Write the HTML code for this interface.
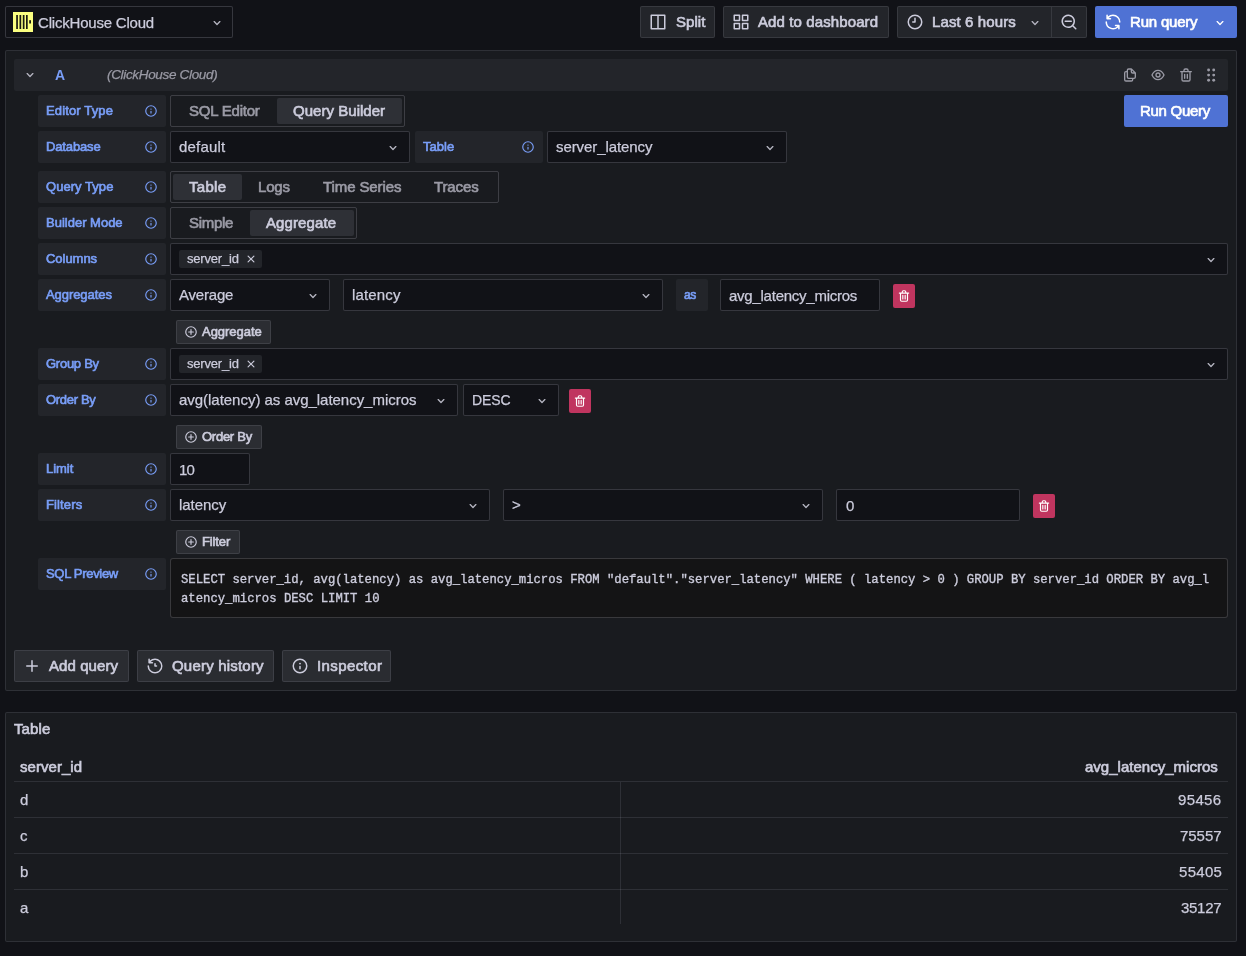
<!DOCTYPE html><html><head><meta charset="utf-8"><style>html,body{margin:0;padding:0;width:1246px;height:956px;overflow:hidden;background:#111217;}.a{position:absolute;box-sizing:border-box;}.t{position:absolute;white-space:pre;will-change:transform;font-family:"Liberation Sans",sans-serif;}.m{font-family:"Liberation Mono",monospace;}</style></head><body>
<div class="a" style="left:5px;top:6px;width:228px;height:32px;background:#111217;border:1px solid rgba(204,204,220,0.20);border-radius:2px;"></div>
<svg class="a" style="left:13px;top:12px;" width="20" height="20" viewBox="0 0 20 20"><rect x="0" y="0" width="20" height="20" fill="#fbff80"/><rect x="3.2" y="3" width="1.7" height="14" fill="#1a1a10"/><rect x="6.5" y="3" width="1.7" height="14" fill="#1a1a10"/><rect x="9.8" y="3" width="1.7" height="14" fill="#1a1a10"/><rect x="13.0" y="3" width="1.7" height="14" fill="#1a1a10"/><rect x="16.2" y="8.2" width="1.8" height="3.3" fill="#1a1a10"/></svg>
<svg class="a" style="left:209px;top:14.5px;" width="16" height="16" viewBox="0 0 24 24"><path d="M17,9.17a1,1,0,0,0-1.41,0L12,12.71,8.46,9.17a1,1,0,0,0-1.41,0,1,1,0,0,0,0,1.42l4.24,4.24a1,1,0,0,0,1.42,0L17,10.59A1,1,0,0,0,17,9.17Z" fill="#b4b4c0"/></svg>
<div class="a" style="left:640px;top:6px;width:75px;height:32px;background:#23252a;border:1px solid rgba(204,204,220,0.12);border-radius:2px;"></div>
<svg class="a" style="left:648.7px;top:13px;" width="18" height="18" viewBox="0 0 24 24"><path d="M21,2H3A1,1,0,0,0,2,3V21a1,1,0,0,0,1,1H21a1,1,0,0,0,1-1V3A1,1,0,0,0,21,2ZM11,20H4V4h7Zm9,0H13V4h7Z" fill="#ccccdc"/></svg>
<div class="a" style="left:723px;top:6px;width:166px;height:32px;background:#23252a;border:1px solid rgba(204,204,220,0.12);border-radius:2px;"></div>
<svg class="a" style="left:731.6px;top:13px;" width="18" height="18" viewBox="0 0 24 24"><path d="M10,13H3a1,1,0,0,0-1,1v7a1,1,0,0,0,1,1h7a1,1,0,0,0,1-1V14A1,1,0,0,0,10,13ZM9,20H4V15H9ZM21,2H14a1,1,0,0,0-1,1v7a1,1,0,0,0,1,1h7a1,1,0,0,0,1-1V3A1,1,0,0,0,21,2ZM20,9H15V4h5Zm1,4H14a1,1,0,0,0-1,1v7a1,1,0,0,0,1,1h7a1,1,0,0,0,1-1V14A1,1,0,0,0,21,13Zm-1,7H15V15h5ZM10,2H3A1,1,0,0,0,2,3v7a1,1,0,0,0,1,1h7a1,1,0,0,0,1-1V3A1,1,0,0,0,10,2ZM9,9H4V4H9Z" fill="#ccccdc"/></svg>
<div class="a" style="left:897px;top:6px;width:190px;height:32px;background:#23252a;border:1px solid rgba(204,204,220,0.12);border-radius:2px;"></div>
<div class="a" style="left:1051px;top:7px;width:1px;height:30px;background:rgba(204,204,220,0.12);"></div>
<svg class="a" style="left:905.9px;top:13px;" width="18" height="18" viewBox="0 0 24 24"><path d="M12,2A10,10,0,1,0,22,12,10,10,0,0,0,12,2Zm0,18a8,8,0,1,1,8-8A8,8,0,0,1,12,20Zm0-14a1,1,0,0,0-1,1v4H9a1,1,0,0,0,0,2h3a1,1,0,0,0,1-1V7A1,1,0,0,0,12,6Z" fill="#ccccdc"/></svg>
<svg class="a" style="left:1027px;top:14.5px;" width="16" height="16" viewBox="0 0 24 24"><path d="M17,9.17a1,1,0,0,0-1.41,0L12,12.71,8.46,9.17a1,1,0,0,0-1.41,0,1,1,0,0,0,0,1.42l4.24,4.24a1,1,0,0,0,1.42,0L17,10.59A1,1,0,0,0,17,9.17Z" fill="#b4b4c0"/></svg>
<svg class="a" style="left:1059.8px;top:13px;" width="18" height="18" viewBox="0 0 24 24"><path d="M21.71,20.29,18,16.61A9,9,0,1,0,16.61,18l3.68,3.68a1,1,0,0,0,1.42,0A1,1,0,0,0,21.71,20.29ZM11,18a7,7,0,1,1,7-7A7,7,0,0,1,11,18Zm4-8H7a1,1,0,0,0,0,2h8a1,1,0,0,0,0-2Z" fill="#ccccdc"/></svg>
<div class="a" style="left:1095px;top:6px;width:142px;height:32px;background:#4f72d4;border-radius:2px;"></div>
<svg class="a" style="left:1103.6px;top:13px;" width="18" height="18" viewBox="0 0 24 24"><path d="M19.91,15.51H15.38a1,1,0,0,0,0,2h2.4A8,8,0,0,1,4,12a1,1,0,0,0-2,0,10,10,0,0,0,16.88,7.23V21a1,1,0,0,0,2,0V16.5A1,1,0,0,0,19.91,15.51ZM12,2A10,10,0,0,0,5.12,4.77V3a1,1,0,0,0-2,0V7.5a1,1,0,0,0,1,1h4.5a1,1,0,0,0,0-2H6.22A8,8,0,0,1,20,12a1,1,0,0,0,2,0A10,10,0,0,0,12,2Z" fill="#ffffff"/></svg>
<svg class="a" style="left:1212.3px;top:14.5px;" width="16" height="16" viewBox="0 0 24 24"><path d="M17,9.17a1,1,0,0,0-1.41,0L12,12.71,8.46,9.17a1,1,0,0,0-1.41,0,1,1,0,0,0,0,1.42l4.24,4.24a1,1,0,0,0,1.42,0L17,10.59A1,1,0,0,0,17,9.17Z" fill="#ffffff"/></svg>
<div class="a" style="left:5px;top:50px;width:1232px;height:641px;background:#191b1f;border:1px solid rgba(204,204,220,0.12);border-radius:2px;"></div>
<div class="a" style="left:14px;top:59px;width:1214px;height:32px;background:#23252a;border-radius:2px;"></div>
<svg class="a" style="left:22.3px;top:66.6px;" width="16" height="16" viewBox="0 0 24 24"><path d="M17,9.17a1,1,0,0,0-1.41,0L12,12.71,8.46,9.17a1,1,0,0,0-1.41,0,1,1,0,0,0,0,1.42l4.24,4.24a1,1,0,0,0,1.42,0L17,10.59A1,1,0,0,0,17,9.17Z" fill="#b4b4c0"/></svg>
<svg class="a" style="left:1121.6px;top:67px;" width="16" height="16" viewBox="0 0 24 24"><path d="M21,8.94a1.31,1.31,0,0,0-.06-.27l0-.09a1.07,1.07,0,0,0-.19-.28h0l-6-6h0a1.07,1.07,0,0,0-.28-.19.32.32,0,0,0-.09,0A.88.88,0,0,0,14.05,2H10A3,3,0,0,0,7,5V6H6A3,3,0,0,0,3,9V19a3,3,0,0,0,3,3h8a3,3,0,0,0,3-3V18h1a3,3,0,0,0,3-3V9S21,9,21,8.94ZM15,5.41,17.59,8H16a1,1,0,0,1-1-1ZM15,19a1,1,0,0,1-1,1H6a1,1,0,0,1-1-1V9A1,1,0,0,1,6,8H7v7a3,3,0,0,0,3,3h5Zm4-4a1,1,0,0,1-1,1H10a1,1,0,0,1-1-1V5a1,1,0,0,1,1-1h3V7a3,3,0,0,0,3,3h3Z" fill="#9a9aa5"/></svg>
<svg class="a" style="left:1150.2px;top:67px;" width="16" height="16" viewBox="0 0 24 24"><path d="M21.92,11.6C19.9,6.91,16.1,4,12,4S4.1,6.91,2.08,11.6a1,1,0,0,0,0,.8C4.1,17.09,7.9,20,12,20s7.9-2.910,9.92-7.6A1,1,0,0,0,21.92,11.6ZM12,18c-3.17,0-6.170-2.29-7.9-6C5.83,8.29,8.83,6,12,6s6.17,2.29,7.9,6C18.17,15.71,15.17,18,12,18ZM12,8a4,4,0,1,0,4,4A4,4,0,0,0,12,8Zm0,6a2,2,0,1,1,2-2A2,2,0,0,1,12,14Z" fill="#9a9aa5"/></svg>
<svg class="a" style="left:1178.1px;top:67px;" width="16" height="16" viewBox="0 0 24 24"><path d="M10,18a1,1,0,0,0,1-1V11a1,1,0,0,0-2,0v6A1,1,0,0,0,10,18ZM20,6H16V5a3,3,0,0,0-3-3H11A3,3,0,0,0,8,5V6H4A1,1,0,0,0,4,8H5V19a3,3,0,0,0,3,3h8a3,3,0,0,0,3-3V8h1a1,1,0,0,0,0-2ZM10,5a1,1,0,0,1,1-1h2a1,1,0,0,1,1,1V6H10Zm7,14a1,1,0,0,1-1,1H8a1,1,0,0,1-1-1V8H17Zm-3-1a1,1,0,0,0,1-1V11a1,1,0,0,0-2,0v6A1,1,0,0,0,14,18Z" fill="#9a9aa5"/></svg>
<svg class="a" style="left:1204px;top:65px;" width="14" height="18" viewBox="0 0 14 18"><circle cx="4.6" cy="5.0" r="1.45" fill="#9a9aa5"/><circle cx="4.6" cy="10.1" r="1.45" fill="#9a9aa5"/><circle cx="4.6" cy="15.2" r="1.45" fill="#9a9aa5"/><circle cx="9.7" cy="5.0" r="1.45" fill="#9a9aa5"/><circle cx="9.7" cy="10.1" r="1.45" fill="#9a9aa5"/><circle cx="9.7" cy="15.2" r="1.45" fill="#9a9aa5"/></svg>
<div class="a" style="left:1124px;top:95px;width:104px;height:32px;background:#4f72d4;border-radius:2px;"></div>
<div class="a" style="left:38px;top:95px;width:128px;height:32px;background:#23252a;border-radius:2px;"></div>
<svg class="a" style="left:143.8px;top:104px;" width="14" height="14" viewBox="0 0 24 24"><path d="M12,2A10,10,0,1,0,22,12,10,10,0,0,0,12,2Zm0,18a8,8,0,1,1,8-8A8,8,0,0,1,12,20Zm0-8.5a1,1,0,0,0-1,1v3a1,1,0,0,0,2,0v-3A1,1,0,0,0,12,11.5Zm0-4a1.25,1.25,0,1,0,1.25,1.25A1.25,1.25,0,0,0,12,7.5Z" fill="#799ef8"/></svg>
<div class="a" style="left:170px;top:95px;width:235px;height:32px;border:1px solid rgba(204,204,220,0.20);border-radius:2px;"></div>
<div class="a" style="left:277px;top:98px;width:125px;height:26px;background:#2e3036;border-radius:2px;"></div>
<div class="a" style="left:38px;top:131px;width:128px;height:32px;background:#23252a;border-radius:2px;"></div>
<svg class="a" style="left:143.8px;top:140px;" width="14" height="14" viewBox="0 0 24 24"><path d="M12,2A10,10,0,1,0,22,12,10,10,0,0,0,12,2Zm0,18a8,8,0,1,1,8-8A8,8,0,0,1,12,20Zm0-8.5a1,1,0,0,0-1,1v3a1,1,0,0,0,2,0v-3A1,1,0,0,0,12,11.5Zm0-4a1.25,1.25,0,1,0,1.25,1.25A1.25,1.25,0,0,0,12,7.5Z" fill="#799ef8"/></svg>
<div class="a" style="left:170px;top:131px;width:240px;height:32px;background:#111217;border:1px solid rgba(204,204,220,0.20);border-radius:2px;"></div>
<svg class="a" style="left:384.8px;top:139.5px;" width="16" height="16" viewBox="0 0 24 24"><path d="M17,9.17a1,1,0,0,0-1.41,0L12,12.71,8.46,9.17a1,1,0,0,0-1.41,0,1,1,0,0,0,0,1.42l4.24,4.24a1,1,0,0,0,1.42,0L17,10.59A1,1,0,0,0,17,9.17Z" fill="#b4b4c0"/></svg>
<div class="a" style="left:415px;top:131px;width:128px;height:32px;background:#23252a;border-radius:2px;"></div>
<svg class="a" style="left:520.8px;top:140px;" width="14" height="14" viewBox="0 0 24 24"><path d="M12,2A10,10,0,1,0,22,12,10,10,0,0,0,12,2Zm0,18a8,8,0,1,1,8-8A8,8,0,0,1,12,20Zm0-8.5a1,1,0,0,0-1,1v3a1,1,0,0,0,2,0v-3A1,1,0,0,0,12,11.5Zm0-4a1.25,1.25,0,1,0,1.25,1.25A1.25,1.25,0,0,0,12,7.5Z" fill="#799ef8"/></svg>
<div class="a" style="left:547px;top:131px;width:240px;height:32px;background:#111217;border:1px solid rgba(204,204,220,0.20);border-radius:2px;"></div>
<svg class="a" style="left:761.8px;top:139.5px;" width="16" height="16" viewBox="0 0 24 24"><path d="M17,9.17a1,1,0,0,0-1.41,0L12,12.71,8.46,9.17a1,1,0,0,0-1.41,0,1,1,0,0,0,0,1.42l4.24,4.24a1,1,0,0,0,1.42,0L17,10.59A1,1,0,0,0,17,9.17Z" fill="#b4b4c0"/></svg>
<div class="a" style="left:38px;top:171px;width:128px;height:32px;background:#23252a;border-radius:2px;"></div>
<svg class="a" style="left:143.8px;top:180px;" width="14" height="14" viewBox="0 0 24 24"><path d="M12,2A10,10,0,1,0,22,12,10,10,0,0,0,12,2Zm0,18a8,8,0,1,1,8-8A8,8,0,0,1,12,20Zm0-8.5a1,1,0,0,0-1,1v3a1,1,0,0,0,2,0v-3A1,1,0,0,0,12,11.5Zm0-4a1.25,1.25,0,1,0,1.25,1.25A1.25,1.25,0,0,0,12,7.5Z" fill="#799ef8"/></svg>
<div class="a" style="left:170px;top:171px;width:329px;height:32px;border:1px solid rgba(204,204,220,0.20);border-radius:2px;"></div>
<div class="a" style="left:173px;top:174px;width:69px;height:26px;background:#2e3036;border-radius:2px;"></div>
<div class="a" style="left:38px;top:207px;width:128px;height:32px;background:#23252a;border-radius:2px;"></div>
<svg class="a" style="left:143.8px;top:216px;" width="14" height="14" viewBox="0 0 24 24"><path d="M12,2A10,10,0,1,0,22,12,10,10,0,0,0,12,2Zm0,18a8,8,0,1,1,8-8A8,8,0,0,1,12,20Zm0-8.5a1,1,0,0,0-1,1v3a1,1,0,0,0,2,0v-3A1,1,0,0,0,12,11.5Zm0-4a1.25,1.25,0,1,0,1.25,1.25A1.25,1.25,0,0,0,12,7.5Z" fill="#799ef8"/></svg>
<div class="a" style="left:170px;top:207px;width:187px;height:32px;border:1px solid rgba(204,204,220,0.20);border-radius:2px;"></div>
<div class="a" style="left:250px;top:210px;width:104px;height:26px;background:#2e3036;border-radius:2px;"></div>
<div class="a" style="left:38px;top:243px;width:128px;height:32px;background:#23252a;border-radius:2px;"></div>
<svg class="a" style="left:143.8px;top:252px;" width="14" height="14" viewBox="0 0 24 24"><path d="M12,2A10,10,0,1,0,22,12,10,10,0,0,0,12,2Zm0,18a8,8,0,1,1,8-8A8,8,0,0,1,12,20Zm0-8.5a1,1,0,0,0-1,1v3a1,1,0,0,0,2,0v-3A1,1,0,0,0,12,11.5Zm0-4a1.25,1.25,0,1,0,1.25,1.25A1.25,1.25,0,0,0,12,7.5Z" fill="#799ef8"/></svg>
<div class="a" style="left:170px;top:243px;width:1058px;height:32px;background:#111217;border:1px solid rgba(204,204,220,0.20);border-radius:2px;"></div>
<div class="a" style="left:179px;top:250px;width:83px;height:18px;background:#23252a;border-radius:2px;"></div>
<svg class="a" style="left:243.5px;top:252px;" width="14" height="14" viewBox="0 0 24 24"><path d="M13.41,12l4.3-4.29a1,1,0,1,0-1.42-1.42L12,10.59,7.710,6.29A1,1,0,0,0,6.29,7.71L10.59,12l-4.3,4.29a1,1,0,0,0,0,1.42,1,1,0,0,0,1.42,0L12,13.41l4.29,4.3a1,1,0,0,0,1.420,0,1,1,0,0,0,0-1.42Z" fill="#ccccdc"/></svg>
<svg class="a" style="left:1203px;top:251.5px;" width="16" height="16" viewBox="0 0 24 24"><path d="M17,9.17a1,1,0,0,0-1.41,0L12,12.71,8.46,9.17a1,1,0,0,0-1.41,0,1,1,0,0,0,0,1.42l4.24,4.24a1,1,0,0,0,1.42,0L17,10.59A1,1,0,0,0,17,9.17Z" fill="#b4b4c0"/></svg>
<div class="a" style="left:38px;top:279px;width:128px;height:32px;background:#23252a;border-radius:2px;"></div>
<svg class="a" style="left:143.8px;top:288px;" width="14" height="14" viewBox="0 0 24 24"><path d="M12,2A10,10,0,1,0,22,12,10,10,0,0,0,12,2Zm0,18a8,8,0,1,1,8-8A8,8,0,0,1,12,20Zm0-8.5a1,1,0,0,0-1,1v3a1,1,0,0,0,2,0v-3A1,1,0,0,0,12,11.5Zm0-4a1.25,1.25,0,1,0,1.25,1.25A1.25,1.25,0,0,0,12,7.5Z" fill="#799ef8"/></svg>
<div class="a" style="left:170px;top:279px;width:160px;height:32px;background:#111217;border:1px solid rgba(204,204,220,0.20);border-radius:2px;"></div>
<svg class="a" style="left:304.8px;top:287.5px;" width="16" height="16" viewBox="0 0 24 24"><path d="M17,9.17a1,1,0,0,0-1.41,0L12,12.71,8.46,9.17a1,1,0,0,0-1.41,0,1,1,0,0,0,0,1.42l4.24,4.24a1,1,0,0,0,1.42,0L17,10.59A1,1,0,0,0,17,9.17Z" fill="#b4b4c0"/></svg>
<div class="a" style="left:343px;top:279px;width:320px;height:32px;background:#111217;border:1px solid rgba(204,204,220,0.20);border-radius:2px;"></div>
<svg class="a" style="left:637.8px;top:287.5px;" width="16" height="16" viewBox="0 0 24 24"><path d="M17,9.17a1,1,0,0,0-1.41,0L12,12.71,8.46,9.17a1,1,0,0,0-1.41,0,1,1,0,0,0,0,1.42l4.24,4.24a1,1,0,0,0,1.42,0L17,10.59A1,1,0,0,0,17,9.17Z" fill="#b4b4c0"/></svg>
<div class="a" style="left:676px;top:279px;width:32px;height:32px;background:#23252a;border-radius:2px;"></div>
<div class="a" style="left:720px;top:279px;width:160px;height:32px;background:#111217;border:1px solid rgba(204,204,220,0.20);border-radius:2px;"></div>
<div class="a" style="left:893px;top:284px;width:22px;height:24px;background:#c0355f;border-radius:2px;"></div>
<svg class="a" style="left:897px;top:289px;" width="14" height="14" viewBox="0 0 24 24"><path d="M10,18a1,1,0,0,0,1-1V11a1,1,0,0,0-2,0v6A1,1,0,0,0,10,18ZM20,6H16V5a3,3,0,0,0-3-3H11A3,3,0,0,0,8,5V6H4A1,1,0,0,0,4,8H5V19a3,3,0,0,0,3,3h8a3,3,0,0,0,3-3V8h1a1,1,0,0,0,0-2ZM10,5a1,1,0,0,1,1-1h2a1,1,0,0,1,1,1V6H10Zm7,14a1,1,0,0,1-1,1H8a1,1,0,0,1-1-1V8H17Zm-3-1a1,1,0,0,0,1-1V11a1,1,0,0,0-2,0v6A1,1,0,0,0,14,18Z" fill="#ffffff"/></svg>
<div class="a" style="left:176px;top:320px;width:95px;height:24px;background:#2b2d32;border:1px solid rgba(204,204,220,0.12);border-radius:2px;"></div>
<svg class="a" style="left:183.6px;top:325px;" width="14" height="14" viewBox="0 0 24 24"><path d="M12,2A10,10,0,1,0,22,12,10,10,0,0,0,12,2Zm0,18a8,8,0,1,1,8-8A8,8,0,0,1,12,20Zm4-9H13V8a1,1,0,0,0-2,0v3H8a1,1,0,0,0,0,2h3v3a1,1,0,0,0,2,0V13h3a1,1,0,0,0,0-2Z" fill="#ccccdc"/></svg>
<div class="a" style="left:38px;top:348px;width:128px;height:32px;background:#23252a;border-radius:2px;"></div>
<svg class="a" style="left:143.8px;top:357px;" width="14" height="14" viewBox="0 0 24 24"><path d="M12,2A10,10,0,1,0,22,12,10,10,0,0,0,12,2Zm0,18a8,8,0,1,1,8-8A8,8,0,0,1,12,20Zm0-8.5a1,1,0,0,0-1,1v3a1,1,0,0,0,2,0v-3A1,1,0,0,0,12,11.5Zm0-4a1.25,1.25,0,1,0,1.25,1.25A1.25,1.25,0,0,0,12,7.5Z" fill="#799ef8"/></svg>
<div class="a" style="left:170px;top:348px;width:1058px;height:32px;background:#111217;border:1px solid rgba(204,204,220,0.20);border-radius:2px;"></div>
<div class="a" style="left:179px;top:355px;width:83px;height:18px;background:#23252a;border-radius:2px;"></div>
<svg class="a" style="left:243.5px;top:357px;" width="14" height="14" viewBox="0 0 24 24"><path d="M13.41,12l4.3-4.29a1,1,0,1,0-1.42-1.42L12,10.59,7.710,6.29A1,1,0,0,0,6.29,7.71L10.59,12l-4.3,4.29a1,1,0,0,0,0,1.42,1,1,0,0,0,1.42,0L12,13.41l4.29,4.3a1,1,0,0,0,1.420,0,1,1,0,0,0,0-1.42Z" fill="#ccccdc"/></svg>
<svg class="a" style="left:1203px;top:356.5px;" width="16" height="16" viewBox="0 0 24 24"><path d="M17,9.17a1,1,0,0,0-1.41,0L12,12.71,8.46,9.17a1,1,0,0,0-1.41,0,1,1,0,0,0,0,1.42l4.24,4.24a1,1,0,0,0,1.42,0L17,10.59A1,1,0,0,0,17,9.17Z" fill="#b4b4c0"/></svg>
<div class="a" style="left:38px;top:384px;width:128px;height:32px;background:#23252a;border-radius:2px;"></div>
<svg class="a" style="left:143.8px;top:393px;" width="14" height="14" viewBox="0 0 24 24"><path d="M12,2A10,10,0,1,0,22,12,10,10,0,0,0,12,2Zm0,18a8,8,0,1,1,8-8A8,8,0,0,1,12,20Zm0-8.5a1,1,0,0,0-1,1v3a1,1,0,0,0,2,0v-3A1,1,0,0,0,12,11.5Zm0-4a1.25,1.25,0,1,0,1.25,1.25A1.25,1.25,0,0,0,12,7.5Z" fill="#799ef8"/></svg>
<div class="a" style="left:170px;top:384px;width:288px;height:32px;background:#111217;border:1px solid rgba(204,204,220,0.20);border-radius:2px;"></div>
<svg class="a" style="left:432.8px;top:392.5px;" width="16" height="16" viewBox="0 0 24 24"><path d="M17,9.17a1,1,0,0,0-1.41,0L12,12.71,8.46,9.17a1,1,0,0,0-1.41,0,1,1,0,0,0,0,1.42l4.24,4.24a1,1,0,0,0,1.42,0L17,10.59A1,1,0,0,0,17,9.17Z" fill="#b4b4c0"/></svg>
<div class="a" style="left:463px;top:384px;width:96px;height:32px;background:#111217;border:1px solid rgba(204,204,220,0.20);border-radius:2px;"></div>
<svg class="a" style="left:533.8px;top:392.5px;" width="16" height="16" viewBox="0 0 24 24"><path d="M17,9.17a1,1,0,0,0-1.41,0L12,12.71,8.46,9.17a1,1,0,0,0-1.41,0,1,1,0,0,0,0,1.42l4.24,4.24a1,1,0,0,0,1.42,0L17,10.59A1,1,0,0,0,17,9.17Z" fill="#b4b4c0"/></svg>
<div class="a" style="left:569px;top:389px;width:22px;height:24px;background:#c0355f;border-radius:2px;"></div>
<svg class="a" style="left:573px;top:394px;" width="14" height="14" viewBox="0 0 24 24"><path d="M10,18a1,1,0,0,0,1-1V11a1,1,0,0,0-2,0v6A1,1,0,0,0,10,18ZM20,6H16V5a3,3,0,0,0-3-3H11A3,3,0,0,0,8,5V6H4A1,1,0,0,0,4,8H5V19a3,3,0,0,0,3,3h8a3,3,0,0,0,3-3V8h1a1,1,0,0,0,0-2ZM10,5a1,1,0,0,1,1-1h2a1,1,0,0,1,1,1V6H10Zm7,14a1,1,0,0,1-1,1H8a1,1,0,0,1-1-1V8H17Zm-3-1a1,1,0,0,0,1-1V11a1,1,0,0,0-2,0v6A1,1,0,0,0,14,18Z" fill="#ffffff"/></svg>
<div class="a" style="left:176px;top:425px;width:86px;height:24px;background:#2b2d32;border:1px solid rgba(204,204,220,0.12);border-radius:2px;"></div>
<svg class="a" style="left:183.6px;top:430px;" width="14" height="14" viewBox="0 0 24 24"><path d="M12,2A10,10,0,1,0,22,12,10,10,0,0,0,12,2Zm0,18a8,8,0,1,1,8-8A8,8,0,0,1,12,20Zm4-9H13V8a1,1,0,0,0-2,0v3H8a1,1,0,0,0,0,2h3v3a1,1,0,0,0,2,0V13h3a1,1,0,0,0,0-2Z" fill="#ccccdc"/></svg>
<div class="a" style="left:38px;top:453px;width:128px;height:32px;background:#23252a;border-radius:2px;"></div>
<svg class="a" style="left:143.8px;top:462px;" width="14" height="14" viewBox="0 0 24 24"><path d="M12,2A10,10,0,1,0,22,12,10,10,0,0,0,12,2Zm0,18a8,8,0,1,1,8-8A8,8,0,0,1,12,20Zm0-8.5a1,1,0,0,0-1,1v3a1,1,0,0,0,2,0v-3A1,1,0,0,0,12,11.5Zm0-4a1.25,1.25,0,1,0,1.25,1.25A1.25,1.25,0,0,0,12,7.5Z" fill="#799ef8"/></svg>
<div class="a" style="left:170px;top:453px;width:80px;height:32px;background:#111217;border:1px solid rgba(204,204,220,0.20);border-radius:2px;"></div>
<div class="a" style="left:38px;top:489px;width:128px;height:32px;background:#23252a;border-radius:2px;"></div>
<svg class="a" style="left:143.8px;top:498px;" width="14" height="14" viewBox="0 0 24 24"><path d="M12,2A10,10,0,1,0,22,12,10,10,0,0,0,12,2Zm0,18a8,8,0,1,1,8-8A8,8,0,0,1,12,20Zm0-8.5a1,1,0,0,0-1,1v3a1,1,0,0,0,2,0v-3A1,1,0,0,0,12,11.5Zm0-4a1.25,1.25,0,1,0,1.25,1.25A1.25,1.25,0,0,0,12,7.5Z" fill="#799ef8"/></svg>
<div class="a" style="left:170px;top:489px;width:320px;height:32px;background:#111217;border:1px solid rgba(204,204,220,0.20);border-radius:2px;"></div>
<svg class="a" style="left:464.8px;top:497.5px;" width="16" height="16" viewBox="0 0 24 24"><path d="M17,9.17a1,1,0,0,0-1.41,0L12,12.71,8.46,9.17a1,1,0,0,0-1.41,0,1,1,0,0,0,0,1.42l4.24,4.24a1,1,0,0,0,1.42,0L17,10.59A1,1,0,0,0,17,9.17Z" fill="#b4b4c0"/></svg>
<div class="a" style="left:503px;top:489px;width:320px;height:32px;background:#111217;border:1px solid rgba(204,204,220,0.20);border-radius:2px;"></div>
<svg class="a" style="left:797.8px;top:497.5px;" width="16" height="16" viewBox="0 0 24 24"><path d="M17,9.17a1,1,0,0,0-1.41,0L12,12.71,8.46,9.17a1,1,0,0,0-1.41,0,1,1,0,0,0,0,1.42l4.24,4.24a1,1,0,0,0,1.42,0L17,10.59A1,1,0,0,0,17,9.17Z" fill="#b4b4c0"/></svg>
<div class="a" style="left:836px;top:489px;width:184px;height:32px;background:#111217;border:1px solid rgba(204,204,220,0.20);border-radius:2px;"></div>
<div class="a" style="left:1033px;top:494px;width:22px;height:24px;background:#c0355f;border-radius:2px;"></div>
<svg class="a" style="left:1037px;top:499px;" width="14" height="14" viewBox="0 0 24 24"><path d="M10,18a1,1,0,0,0,1-1V11a1,1,0,0,0-2,0v6A1,1,0,0,0,10,18ZM20,6H16V5a3,3,0,0,0-3-3H11A3,3,0,0,0,8,5V6H4A1,1,0,0,0,4,8H5V19a3,3,0,0,0,3,3h8a3,3,0,0,0,3-3V8h1a1,1,0,0,0,0-2ZM10,5a1,1,0,0,1,1-1h2a1,1,0,0,1,1,1V6H10Zm7,14a1,1,0,0,1-1,1H8a1,1,0,0,1-1-1V8H17Zm-3-1a1,1,0,0,0,1-1V11a1,1,0,0,0-2,0v6A1,1,0,0,0,14,18Z" fill="#ffffff"/></svg>
<div class="a" style="left:176px;top:530px;width:64px;height:24px;background:#2b2d32;border:1px solid rgba(204,204,220,0.12);border-radius:2px;"></div>
<svg class="a" style="left:183.6px;top:535px;" width="14" height="14" viewBox="0 0 24 24"><path d="M12,2A10,10,0,1,0,22,12,10,10,0,0,0,12,2Zm0,18a8,8,0,1,1,8-8A8,8,0,0,1,12,20Zm4-9H13V8a1,1,0,0,0-2,0v3H8a1,1,0,0,0,0,2h3v3a1,1,0,0,0,2,0V13h3a1,1,0,0,0,0-2Z" fill="#ccccdc"/></svg>
<div class="a" style="left:38px;top:558px;width:128px;height:32px;background:#23252a;border-radius:2px;"></div>
<svg class="a" style="left:143.8px;top:567px;" width="14" height="14" viewBox="0 0 24 24"><path d="M12,2A10,10,0,1,0,22,12,10,10,0,0,0,12,2Zm0,18a8,8,0,1,1,8-8A8,8,0,0,1,12,20Zm0-8.5a1,1,0,0,0-1,1v3a1,1,0,0,0,2,0v-3A1,1,0,0,0,12,11.5Zm0-4a1.25,1.25,0,1,0,1.25,1.25A1.25,1.25,0,0,0,12,7.5Z" fill="#799ef8"/></svg>
<div class="a" style="left:170px;top:558px;width:1058px;height:60px;background:#141415;border:1px solid rgba(204,204,220,0.20);border-radius:3px;"></div>
<div class="a" style="left:14px;top:650px;width:115px;height:32px;background:#2a2c31;border:1px solid rgba(204,204,220,0.12);border-radius:2px;"></div>
<svg class="a" style="left:22.8px;top:657px;" width="18" height="18" viewBox="0 0 24 24"><path d="M19,11H13V5a1,1,0,0,0-2,0v6H5a1,1,0,0,0,0,2h6v6a1,1,0,0,0,2,0V13h6a1,1,0,0,0,0-2Z" fill="#ccccdc"/></svg>
<div class="a" style="left:137px;top:650px;width:137px;height:32px;background:#2a2c31;border:1px solid rgba(204,204,220,0.12);border-radius:2px;"></div>
<svg class="a" style="left:146px;top:657px;" width="18" height="18" viewBox="0 0 24 24"><path d="M12,2A10,10,0,0,0,5.12,4.77V3a1,1,0,0,0-2,0V7.5a1,1,0,0,0,1,1H8.62a1,1,0,0,0,0-2H6.22A8,8,0,1,1,4,12a1,1,0,0,0-2,0A10,10,0,1,0,12,2Zm0,6a1,1,0,0,0-1,1v3a1,1,0,0,0,1,1h2a1,1,0,0,0,0-2H13V9A1,1,0,0,0,12,8Z" fill="#ccccdc"/></svg>
<div class="a" style="left:282px;top:650px;width:109px;height:32px;background:#2a2c31;border:1px solid rgba(204,204,220,0.12);border-radius:2px;"></div>
<svg class="a" style="left:291.1px;top:657px;" width="18" height="18" viewBox="0 0 24 24"><path d="M12,2A10,10,0,1,0,22,12,10,10,0,0,0,12,2Zm0,18a8,8,0,1,1,8-8A8,8,0,0,1,12,20Zm0-8.5a1,1,0,0,0-1,1v3a1,1,0,0,0,2,0v-3A1,1,0,0,0,12,11.5Zm0-4a1.25,1.25,0,1,0,1.25,1.25A1.25,1.25,0,0,0,12,7.5Z" fill="#ccccdc"/></svg>
<div class="a" style="left:5px;top:712px;width:1232px;height:230px;background:#191b1f;border:1px solid rgba(204,204,220,0.12);border-radius:2px;"></div>
<div class="a" style="left:14px;top:781px;width:1214px;height:1px;background:rgba(204,204,220,0.12);"></div>
<div class="a" style="left:14px;top:817px;width:1214px;height:1px;background:rgba(204,204,220,0.12);"></div>
<div class="a" style="left:14px;top:853px;width:1214px;height:1px;background:rgba(204,204,220,0.12);"></div>
<div class="a" style="left:14px;top:889px;width:1214px;height:1px;background:rgba(204,204,220,0.12);"></div>
<div class="a" style="left:620px;top:782px;width:1px;height:142px;background:rgba(204,204,220,0.12);"></div>
<div class="t" style="top:15.25px;font-size:15px;line-height:15px;color:#ccccdc;-webkit-text-stroke:0.25px #ccccdc;letter-spacing:-0.200px;left:38.10px;">ClickHouse Cloud</div>
<div class="t" style="top:14.25px;font-size:15px;line-height:15px;color:#ccccdc;-webkit-text-stroke:0.65px #ccccdc;letter-spacing:0.050px;left:675.50px;">Split</div>
<div class="t" style="top:14.25px;font-size:15px;line-height:15px;color:#ccccdc;-webkit-text-stroke:0.65px #ccccdc;letter-spacing:0.107px;left:757.80px;">Add to dashboard</div>
<div class="t" style="top:14.25px;font-size:15px;line-height:15px;color:#ccccdc;-webkit-text-stroke:0.65px #ccccdc;letter-spacing:0.109px;left:932.30px;">Last 6 hours</div>
<div class="t" style="top:14.25px;font-size:15px;line-height:15px;color:#ffffff;-webkit-text-stroke:0.65px #ffffff;letter-spacing:-0.200px;left:1130.30px;">Run query</div>
<div class="t" style="top:67.60px;font-size:14px;line-height:14px;color:#799ef8;font-weight:bold;left:54.50px;">A</div>
<div class="t" style="top:67.83px;font-size:13.5px;line-height:13.5px;color:#9a9aa5;-webkit-text-stroke:0.25px #9a9aa5;font-style:italic;letter-spacing:-0.329px;left:107.10px;">(ClickHouse Cloud)</div>
<div class="t" style="top:103.25px;font-size:15px;line-height:15px;color:#ffffff;-webkit-text-stroke:0.65px #ffffff;letter-spacing:-0.275px;left:1140.30px;">Run Query</div>
<div class="t" style="top:104.25px;font-size:13px;line-height:13px;color:#799ef8;-webkit-text-stroke:0.65px #799ef8;letter-spacing:0.140px;left:46.00px;">Editor Type</div>
<div class="t" style="top:103.25px;font-size:15px;line-height:15px;color:#9a9aa5;-webkit-text-stroke:0.65px #9a9aa5;letter-spacing:-0.222px;left:189.20px;">SQL Editor</div>
<div class="t" style="top:103.25px;font-size:15px;line-height:15px;color:#ccccdc;-webkit-text-stroke:0.65px #ccccdc;letter-spacing:0.033px;left:292.70px;">Query Builder</div>
<div class="t" style="top:140.25px;font-size:13px;line-height:13px;color:#799ef8;-webkit-text-stroke:0.65px #799ef8;letter-spacing:-0.143px;left:46.00px;">Database</div>
<div class="t" style="top:139.05px;font-size:15px;line-height:15px;color:#ccccdc;-webkit-text-stroke:0.25px #ccccdc;letter-spacing:0.200px;left:179.00px;">default</div>
<div class="t" style="top:140.25px;font-size:13px;line-height:13px;color:#799ef8;-webkit-text-stroke:0.65px #799ef8;letter-spacing:0.050px;left:423.00px;">Table</div>
<div class="t" style="top:139.05px;font-size:15px;line-height:15px;color:#ccccdc;-webkit-text-stroke:0.25px #ccccdc;letter-spacing:-0.077px;left:556.00px;">server_latency</div>
<div class="t" style="top:180.25px;font-size:13px;line-height:13px;color:#799ef8;-webkit-text-stroke:0.65px #799ef8;letter-spacing:0.044px;left:46.00px;">Query Type</div>
<div class="t" style="top:179.25px;font-size:15px;line-height:15px;color:#ccccdc;-webkit-text-stroke:0.65px #ccccdc;letter-spacing:0.300px;left:188.70px;">Table</div>
<div class="t" style="top:179.25px;font-size:15px;line-height:15px;color:#9a9aa5;-webkit-text-stroke:0.65px #9a9aa5;letter-spacing:-0.200px;left:258.00px;">Logs</div>
<div class="t" style="top:179.25px;font-size:15px;line-height:15px;color:#9a9aa5;-webkit-text-stroke:0.65px #9a9aa5;letter-spacing:-0.100px;left:323.00px;">Time Series</div>
<div class="t" style="top:179.25px;font-size:15px;line-height:15px;color:#9a9aa5;-webkit-text-stroke:0.65px #9a9aa5;letter-spacing:-0.120px;left:434.30px;">Traces</div>
<div class="t" style="top:216.25px;font-size:13px;line-height:13px;color:#799ef8;-webkit-text-stroke:0.65px #799ef8;left:46.00px;">Builder Mode</div>
<div class="t" style="top:215.25px;font-size:15px;line-height:15px;color:#9a9aa5;-webkit-text-stroke:0.65px #9a9aa5;letter-spacing:-0.280px;left:188.70px;">Simple</div>
<div class="t" style="top:215.25px;font-size:15px;line-height:15px;color:#ccccdc;-webkit-text-stroke:0.65px #ccccdc;letter-spacing:0.100px;left:266.20px;">Aggregate</div>
<div class="t" style="top:252.25px;font-size:13px;line-height:13px;color:#799ef8;-webkit-text-stroke:0.65px #799ef8;letter-spacing:-0.033px;left:46.00px;">Columns</div>
<div class="t" style="top:251.95px;font-size:13px;line-height:13px;color:#ccccdc;-webkit-text-stroke:0.25px #ccccdc;letter-spacing:-0.200px;left:187.30px;">server_id</div>
<div class="t" style="top:288.25px;font-size:13px;line-height:13px;color:#799ef8;-webkit-text-stroke:0.65px #799ef8;letter-spacing:-0.067px;left:46.00px;">Aggregates</div>
<div class="t" style="top:287.05px;font-size:15px;line-height:15px;color:#ccccdc;-webkit-text-stroke:0.25px #ccccdc;letter-spacing:-0.200px;left:179.00px;">Average</div>
<div class="t" style="top:287.05px;font-size:15px;line-height:15px;color:#ccccdc;-webkit-text-stroke:0.25px #ccccdc;letter-spacing:0.167px;left:352.00px;">latency</div>
<div class="t" style="top:289.10px;font-size:12px;line-height:12px;color:#799ef8;-webkit-text-stroke:0.65px #799ef8;letter-spacing:-0.400px;left:683.90px;">as</div>
<div class="t" style="top:288.15px;font-size:15px;line-height:15px;color:#ccccdc;-webkit-text-stroke:0.25px #ccccdc;letter-spacing:-0.247px;left:728.70px;">avg_latency_micros</div>
<div class="t" style="top:325.05px;font-size:13px;line-height:13px;color:#ccccdc;-webkit-text-stroke:0.65px #ccccdc;letter-spacing:-0.025px;left:201.90px;">Aggregate</div>
<div class="t" style="top:357.25px;font-size:13px;line-height:13px;color:#799ef8;-webkit-text-stroke:0.65px #799ef8;letter-spacing:-0.257px;left:46.00px;">Group By</div>
<div class="t" style="top:356.95px;font-size:13px;line-height:13px;color:#ccccdc;-webkit-text-stroke:0.25px #ccccdc;letter-spacing:-0.200px;left:187.30px;">server_id</div>
<div class="t" style="top:393.25px;font-size:13px;line-height:13px;color:#799ef8;-webkit-text-stroke:0.65px #799ef8;letter-spacing:-0.314px;left:46.00px;">Order By</div>
<div class="t" style="top:392.05px;font-size:15px;line-height:15px;color:#ccccdc;-webkit-text-stroke:0.25px #ccccdc;letter-spacing:-0.030px;left:179.00px;">avg(latency) as avg_latency_micros</div>
<div class="t" style="top:392.90px;font-size:14px;line-height:14px;color:#ccccdc;-webkit-text-stroke:0.25px #ccccdc;letter-spacing:-0.133px;left:472.00px;">DESC</div>
<div class="t" style="top:430.05px;font-size:13px;line-height:13px;color:#ccccdc;-webkit-text-stroke:0.65px #ccccdc;letter-spacing:-0.257px;left:201.90px;">Order By</div>
<div class="t" style="top:462.25px;font-size:13px;line-height:13px;color:#799ef8;-webkit-text-stroke:0.65px #799ef8;letter-spacing:-0.050px;left:46.00px;">Limit</div>
<div class="t" style="top:461.85px;font-size:15px;line-height:15px;color:#ccccdc;-webkit-text-stroke:0.25px #ccccdc;letter-spacing:-0.800px;left:178.90px;">10</div>
<div class="t" style="top:498.25px;font-size:13px;line-height:13px;color:#799ef8;-webkit-text-stroke:0.65px #799ef8;letter-spacing:0.133px;left:46.00px;">Filters</div>
<div class="t" style="top:497.05px;font-size:15px;line-height:15px;color:#ccccdc;-webkit-text-stroke:0.25px #ccccdc;letter-spacing:-0.033px;left:179.00px;">latency</div>
<div class="t" style="top:497.05px;font-size:15px;line-height:15px;color:#ccccdc;-webkit-text-stroke:0.25px #ccccdc;left:512.00px;">&gt;</div>
<div class="t" style="top:497.95px;font-size:15px;line-height:15px;color:#ccccdc;-webkit-text-stroke:0.25px #ccccdc;left:845.50px;">0</div>
<div class="t" style="top:535.05px;font-size:13px;line-height:13px;color:#ccccdc;-webkit-text-stroke:0.65px #ccccdc;letter-spacing:-0.120px;left:201.90px;">Filter</div>
<div class="t" style="top:567.25px;font-size:13px;line-height:13px;color:#799ef8;-webkit-text-stroke:0.65px #799ef8;letter-spacing:-0.320px;left:46.00px;">SQL Preview</div>
<div class="t m" style="top:574.49px;font-size:12.25px;line-height:12.25px;color:#ccccdc;-webkit-text-stroke:0.35px #ccccdc;letter-spacing:-0.007px;left:181.00px;">SELECT server_id, avg(latency) as avg_latency_micros FROM "default"."server_latency" WHERE ( latency &gt; 0 ) GROUP BY server_id ORDER BY avg_l</div>
<div class="t m" style="top:593.49px;font-size:12.25px;line-height:12.25px;color:#ccccdc;-webkit-text-stroke:0.35px #ccccdc;left:181.00px;">atency_micros DESC LIMIT 10</div>
<div class="t" style="top:657.75px;font-size:15px;line-height:15px;color:#ccccdc;-webkit-text-stroke:0.65px #ccccdc;letter-spacing:0.075px;left:49.10px;">Add query</div>
<div class="t" style="top:657.75px;font-size:15px;line-height:15px;color:#ccccdc;-webkit-text-stroke:0.65px #ccccdc;letter-spacing:0.200px;left:172.30px;">Query history</div>
<div class="t" style="top:657.75px;font-size:15px;line-height:15px;color:#ccccdc;-webkit-text-stroke:0.65px #ccccdc;letter-spacing:0.400px;left:317.30px;">Inspector</div>
<div class="t" style="top:721.05px;font-size:15px;line-height:15px;color:#ccccdc;-webkit-text-stroke:0.65px #ccccdc;letter-spacing:0.100px;left:14.10px;">Table</div>
<div class="t" style="top:759.25px;font-size:15px;line-height:15px;color:#ccccdc;-webkit-text-stroke:0.65px #ccccdc;letter-spacing:0.050px;left:20.00px;">server_id</div>
<div class="t" style="top:758.85px;font-size:15px;line-height:15px;color:#ccccdc;-webkit-text-stroke:0.65px #ccccdc;letter-spacing:0.012px;right:28.39px;">avg_latency_micros</div>
<div class="t" style="top:792.45px;font-size:15px;line-height:15px;color:#ccccdc;-webkit-text-stroke:0.25px #ccccdc;left:20.00px;">d</div>
<div class="t" style="top:792.45px;font-size:15px;line-height:15px;color:#ccccdc;-webkit-text-stroke:0.25px #ccccdc;letter-spacing:0.350px;right:24.05px;">95456</div>
<div class="t" style="top:828.45px;font-size:15px;line-height:15px;color:#ccccdc;-webkit-text-stroke:0.25px #ccccdc;left:20.00px;">c</div>
<div class="t" style="top:828.45px;font-size:15px;line-height:15px;color:#ccccdc;-webkit-text-stroke:0.25px #ccccdc;letter-spacing:-0.050px;right:24.45px;">75557</div>
<div class="t" style="top:864.45px;font-size:15px;line-height:15px;color:#ccccdc;-webkit-text-stroke:0.25px #ccccdc;left:20.00px;">b</div>
<div class="t" style="top:864.45px;font-size:15px;line-height:15px;color:#ccccdc;-webkit-text-stroke:0.25px #ccccdc;letter-spacing:0.300px;right:24.10px;">55405</div>
<div class="t" style="top:900.45px;font-size:15px;line-height:15px;color:#ccccdc;-webkit-text-stroke:0.25px #ccccdc;left:20.00px;">a</div>
<div class="t" style="top:900.45px;font-size:15px;line-height:15px;color:#ccccdc;-webkit-text-stroke:0.25px #ccccdc;letter-spacing:-0.300px;right:24.70px;">35127</div>
</body></html>
